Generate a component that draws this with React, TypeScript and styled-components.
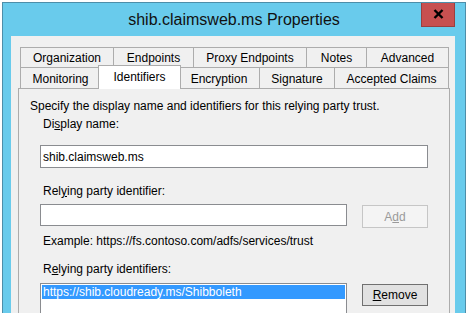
import React from "react";
import styled, { createGlobalStyle } from "styled-components";

const GlobalStyle = createGlobalStyle`
  html, body {
    margin: 0;
    padding: 0;
    background: #ffffff;
    overflow: hidden;
  }
  body {
    font-family: "Liberation Sans", Arial, sans-serif;
    font-size: 12px;
    color: #000000;
  }
`;

const Window = styled.div`
  margin: 2px 0 0 2px;
  width: 464px;
  height: 340px;
  box-sizing: border-box;
  border: 1px solid #4d8ea9;
  background: #69cbec;
  display: flex;
  flex-direction: column;
  overflow: hidden;
`;

const TitleBar = styled.div`
  flex: none;
  height: 33px;
  display: grid;
  grid-template-columns: 1fr auto 1fr;
  align-items: center;
`;

const Title = styled.div`
  grid-column: 2;
  font-size: 16px;
  color: #111111;
  padding-top: 1px;
`;

const CloseButton = styled.div`
  grid-column: 3;
  justify-self: end;
  align-self: start;
  margin: -1px 10px 0 0;
  width: 34px;
  height: 25px;
  box-sizing: border-box;
  background: #c75050;
  border: 1px solid #9a3f3f;
  border-top: none;
  display: flex;
  align-items: center;
  justify-content: center;
`;

const Client = styled.div`
  flex: 1;
  min-height: 0;
  margin: 0 10px 0 8px;
  background: #f0f0f0;
  padding: 11px 5px 0 7px;
`;

const TabStrip = styled.div`
  margin: 0 2px;
  display: flex;
  flex-direction: column;
`;

const TabRow = styled.div<{ $h: number }>`
  display: flex;
  height: ${(p) => p.$h}px;
`;

const Tab = styled.div<{ $w: number; $last?: boolean; $active?: boolean }>`
  box-sizing: border-box;
  width: ${(p) => p.$w}px;
  flex: none;
  height: 100%;
  border-top: 1px solid #acacac;
  border-left: 1px solid #acacac;
  border-right: ${(p) => (p.$last ? "1px solid #acacac" : "none")};
  background: #f0f0f0;
  display: flex;
  align-items: center;
  justify-content: center;
  padding-top: 1px;
  white-space: nowrap;
  color: #000;
`;

const ActiveTab = styled(Tab)`
  position: relative;
  z-index: 1;
  height: 24px;
  margin: -2px -3px 0 -2px;
  border-right: 1px solid #acacac;
  background: #ffffff;
  align-items: flex-start;
  padding-top: 4px;
`;

const Panel = styled.div`
  border: 1px solid #acacac;
  height: 260px;
  background: #f0f0f0;
  padding: 10px 0 0 11px;
`;

const Intro = styled.div`
  line-height: 15px;
`;

const Group = styled.div`
  padding-left: 10px;
  display: flex;
  flex-direction: column;
`;

const Label = styled.div<{ $top: number }>`
  margin-top: ${(p) => p.$top}px;
  padding-left: 3px;
  line-height: 15px;
`;

const Row = styled.div<{ $top: number }>`
  margin-top: ${(p) => p.$top}px;
  display: flex;
  align-items: flex-start;
  gap: 15px;
`;

const TextBox = styled.div<{ $w: number; $h: number }>`
  box-sizing: border-box;
  width: ${(p) => p.$w}px;
  height: ${(p) => p.$h}px;
  border: 1px solid #8a8c90;
  background: #ffffff;
  padding-left: 2px;
  display: flex;
  align-items: center;
`;

const Button = styled.div<{ $disabled?: boolean }>`
  box-sizing: border-box;
  width: 66px;
  height: ${(p) => (p.$disabled ? 23 : 22)}px;
  margin-top: 1px;
  border: 1px solid ${(p) => (p.$disabled ? "#c6c6c6" : "#707070")};
  background: ${(p) => (p.$disabled ? "#f4f4f4" : "#e1e1e1")};
  color: ${(p) => (p.$disabled ? "#9a9a9a" : "#000000")};
  display: flex;
  align-items: center;
  justify-content: center;
`;

const ListBox = styled.div`
  box-sizing: border-box;
  width: 307px;
  height: 70px;
  border: 1px solid #8a8c90;
  background: #ffffff;
  padding: 1px;
`;

const ListItem = styled.div<{ $selected?: boolean }>`
  height: 14px;
  line-height: 14px;
  padding-left: 1px;
  background: ${(p) => (p.$selected ? "#3399ff" : "transparent")};
  color: ${(p) => (p.$selected ? "#ffffff" : "#000000")};
`;

const rowOne = [
  { label: "Organization", w: 93 },
  { label: "Endpoints", w: 80 },
  { label: "Proxy Endpoints", w: 113 },
  { label: "Notes", w: 60 },
  { label: "Advanced", w: 83 },
];

const rowTwo = [
  { label: "Monitoring", w: 80 },
  { label: "Identifiers", w: 83, active: true },
  { label: "Encryption", w: 81 },
  { label: "Signature", w: 75 },
  { label: "Accepted Claims", w: 115 },
];

export default function App() {
  return (
    <>
      <GlobalStyle />
      <Window>
        <TitleBar>
          <Title>shib.claimsweb.ms Properties</Title>
          <CloseButton>
            <svg width="11" height="10" viewBox="0 0 11 10">
              <path d="M1.5 1 L9.5 9 M9.5 1 L1.5 9" stroke="#000" strokeWidth="2.4" />
            </svg>
          </CloseButton>
        </TitleBar>
        <Client>
          <TabStrip>
            <TabRow $h={20}>
              {rowOne.map((t, i) => (
                <Tab key={t.label} $w={t.w} $last={i === rowOne.length - 1}>
                  {t.label}
                </Tab>
              ))}
            </TabRow>
            <TabRow $h={21}>
              {rowTwo.map((t, i) =>
                t.active ? (
                  <ActiveTab key={t.label} $w={t.w}>
                    {t.label}
                  </ActiveTab>
                ) : (
                  <Tab key={t.label} $w={t.w} $last={i === rowTwo.length - 1}>
                    {t.label}
                  </Tab>
                )
              )}
            </TabRow>
          </TabStrip>
          <Panel>
            <Intro>Specify the display name and identifiers for this relying party trust.</Intro>
            <Group>
              <Label $top={3}>
                Di<u>s</u>play name:
              </Label>
              <Row $top={13}>
                <TextBox $w={388} $h={23}>shib.claimsweb.ms</TextBox>
              </Row>
              <Label $top={16}>
                Rel<u>y</u>ing party identifier:
              </Label>
              <Row $top={5}>
                <TextBox $w={307} $h={22} />
                <Button $disabled>
                  A<u>d</u>d
                </Button>
              </Row>
              <Label $top={6}>Example: https://fs.contoso.com/adfs/services/trust</Label>
              <Label $top={13}>
                R<u>e</u>lying party identifiers:
              </Label>
              <Row $top={6}>
                <ListBox>
                  <ListItem $selected>https://shib.cloudready.ms/Shibboleth</ListItem>
                </ListBox>
                <Button>
                  <u>R</u>emove
                </Button>
              </Row>
            </Group>
          </Panel>
        </Client>
      </Window>
    </>
  );
}
